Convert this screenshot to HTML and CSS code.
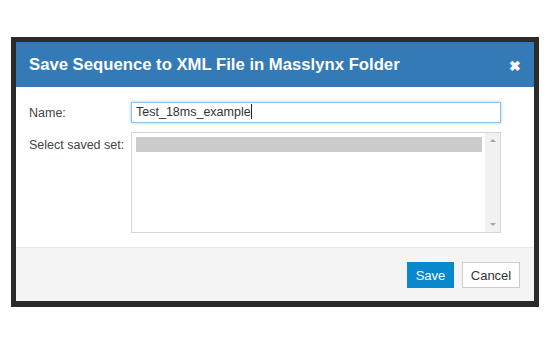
FILE: index.html
```html
<!DOCTYPE html>
<html lang="en">
<head>
    <meta charset="UTF-8">
    <title>Save Sequence</title>
    <link rel="stylesheet" href="styles.css">
</head>
<body>
    <div class="backdrop">
        <div class="modal">
            <div class="modal-header">
                <h2>Save Sequence to XML File in Masslynx Folder</h2>
                <span class="close">&#10006;</span>
            </div>
            <div class="modal-body">
                <div class="row">
                    <label class="field-label">Name:</label>
                    <div class="name-input">Test_18ms_example<span class="caret"></span></div>
                </div>
                <div class="row">
                    <label class="field-label">Select saved set:</label>
                    <div class="listbox">
                        <div class="list-items">
                            <div class="list-item selected"></div>
                        </div>
                        <div class="scrollbar">
                            <span class="arrow up"></span>
                            <span class="arrow down"></span>
                        </div>
                    </div>
                </div>
            </div>
            <div class="modal-footer">
                <button class="btn btn-primary">Save</button>
                <button class="btn btn-default">Cancel</button>
            </div>
        </div>
    </div>
</body>
</html>
```

FILE: styles.css
```css
body {
    margin: 0;
    background: #fff;
    font-family: "Liberation Sans", Arial, sans-serif;
    color: #333;
}
.backdrop {
    margin: 37px 0 0 11px;
    width: 528px;
    padding: 5px 5px 6px 5px;
    box-sizing: border-box;
    background: #2b2b2b;
}
.modal {
    background: #fff;
}
.modal-header {
    height: 45px;
    background: #337ab7;
    display: flex;
    align-items: center;
    justify-content: space-between;
    padding: 0 13px 0 13px;
}
.modal-header h2 {
    margin: 0;
    color: #fff;
    font-size: 16.7px;
    font-weight: bold;
}
.close {
    color: #fff;
    font-size: 14px;
    font-weight: bold;
    margin-top: 3px;
}
.modal-body {
    padding: 15px 33px 14px 13px;
    display: flex;
    flex-direction: column;
    gap: 9px;
}
.row {
    display: flex;
    align-items: flex-start;
}
.field-label {
    width: 102px;
    font-size: 12.5px;
    color: #444;
}
.row:first-child .field-label {
    margin-top: 4px;
}
.row:last-child .field-label {
    margin-top: 6px;
}
.name-input {
    flex: 1;
    height: 21px;
    box-sizing: border-box;
    border: 1px solid #8fc3ec;
    box-shadow: 0 0 3px rgba(102, 175, 233, 0.7);
    font-size: 12.5px;
    line-height: 19px;
    padding: 0 4px;
    color: #333;
}
.caret {
    display: inline-block;
    width: 1px;
    height: 15px;
    background: #222;
    vertical-align: -3px;
}
.listbox {
    flex: 1;
    height: 101px;
    box-sizing: border-box;
    border: 1px solid #d6d6d6;
    display: flex;
}
.list-items {
    flex: 1;
    padding: 4px 3px 0 4px;
}
.list-item {
    height: 15px;
}
.list-item.selected {
    background: #cbcbcb;
}
.scrollbar {
    width: 15px;
    background: #f1f1f1;
    display: flex;
    flex-direction: column;
    justify-content: space-between;
    align-items: center;
    padding: 6px 0;
}
.arrow {
    width: 0;
    height: 0;
    border-left: 3px solid transparent;
    border-right: 3px solid transparent;
}
.arrow.up {
    border-bottom: 3px solid #a3a3a3;
}
.arrow.down {
    border-top: 3px solid #a3a3a3;
}
.modal-footer {
    background: #f4f4f4;
    border-top: 1px solid #e6e6e6;
    height: 54px;
    display: flex;
    justify-content: flex-end;
    align-items: flex-start;
    gap: 8px;
    padding: 14px 14px 0 0;
    box-sizing: border-box;
}
.btn {
    height: 26px;
    font-family: "Liberation Sans", Arial, sans-serif;
    font-size: 13px;
    border-radius: 0;
    cursor: pointer;
}
.btn-primary {
    background: #0a88cd;
    border: 1px solid #0a88cd;
    color: #fff;
    width: 47px;
    padding: 0;
}
.btn-default {
    background: #fff;
    border: 1px solid #ccc;
    color: #333;
    width: 58px;
    padding: 0;
}
```
